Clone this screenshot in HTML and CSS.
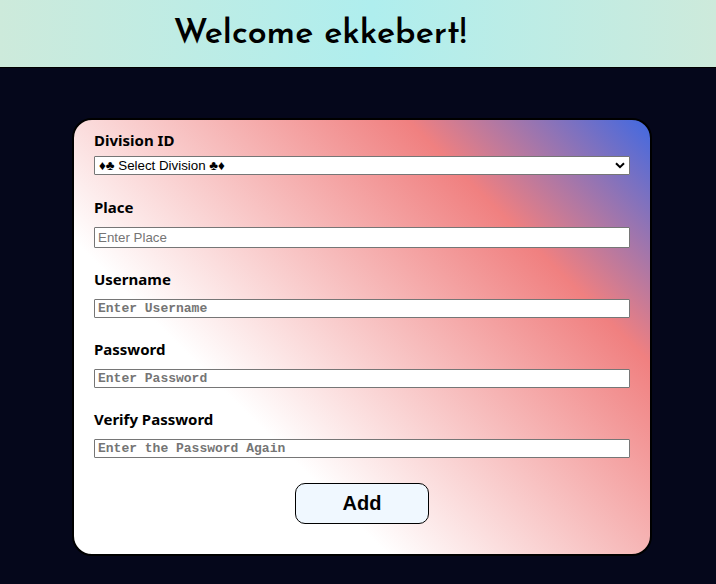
FILE: index.html
```html
<!DOCTYPE html>
<html lang="en">
<head>
<meta charset="utf-8">
<title>Welcome</title>
<link rel="stylesheet" href="styles.css">
</head>
<body>
<header class="banner"><h1>Welcome ekkebert!</h1></header>
<main>
<form class="card">
<div class="field">
<label for="division">Division ID</label>
<div class="select-wrap">
<select id="division"><option>♦♣ Select Division ♣♦</option></select>
<svg class="chevron" viewBox="0 0 10 7" aria-hidden="true"><path d="M1 1.2 5 5.2 9 1.2"/></svg>
</div>
</div>
<div class="field">
<label for="place">Place</label>
<input class="place" id="place" type="text" placeholder="Enter Place">
</div>
<div class="field">
<label for="username">Username</label>
<input class="mono" id="username" type="text" placeholder="Enter Username">
</div>
<div class="field">
<label for="password">Password</label>
<input class="mono" id="password" type="password" placeholder="Enter Password">
</div>
<div class="field">
<label for="verify">Verify Password</label>
<input class="mono" id="verify" type="password" placeholder="Enter the Password Again">
</div>
<button type="submit">Add</button>
</form>
</main>
</body>
</html>
```
FILE: styles.css
```css
* {
  box-sizing: border-box;
}

body {
  margin: 0;
  background: #05071b;
  color: #000;
  font-family: "Segoe UI", "Noto Sans", sans-serif;
}

.banner {
  padding: 10px 76px 8px 0;
  border-bottom: 1px solid #000;
  background: linear-gradient(to right, #cdeadb, #afeeee 52%, #cdeadb);
  text-align: center;
}

h1 {
  margin: 0;
  font: 600 34px/49px "Josefin Sans", Lato, sans-serif;
}

main {
  padding: 50px 64px 28px 72px;
}

.card {
  display: flex;
  flex-direction: column;
  padding: 9px 20px 30px;
  border: 2px solid #000;
  border-radius: 20px;
  background: linear-gradient(45deg, white 31%, lightcoral 76%, royalblue);
}

.field {
  display: flex;
  flex-direction: column;
  gap: 8px;
  margin-bottom: 20px;
}

.field:first-child {
  gap: 4px;
  margin-bottom: 21px;
}

label {
  font-size: 15px;
  font-weight: 700;
  line-height: 23px;
}

input,
select {
  width: 100%;
  height: 19px;
  margin: 0;
  padding: 0 3px;
  border: 1px solid #767676;
  border-radius: 1px;
  background: #fff;
  color: #000;
  font-family: "Liberation Sans", "DejaVu Sans", sans-serif;
}

input::placeholder {
  color: #757575;
}

.place {
  height: 21px;
}

.mono {
  font: 700 13px "Liberation Mono", monospace;
}

.select-wrap {
  position: relative;
  display: flex;
}

select {
  appearance: none;
  padding-left: 4px;
}

.chevron {
  position: absolute;
  top: 6px;
  right: 5px;
  width: 10px;
  height: 7px;
  fill: none;
  stroke: #000;
  stroke-width: 2;
  pointer-events: none;
}

button {
  align-self: center;
  width: 134px;
  height: 41px;
  margin-top: 5px;
  border: 1px solid #000;
  border-radius: 10px;
  background: aliceblue;
  color: #000;
  font: 700 20px "Liberation Sans", sans-serif;
}
```
